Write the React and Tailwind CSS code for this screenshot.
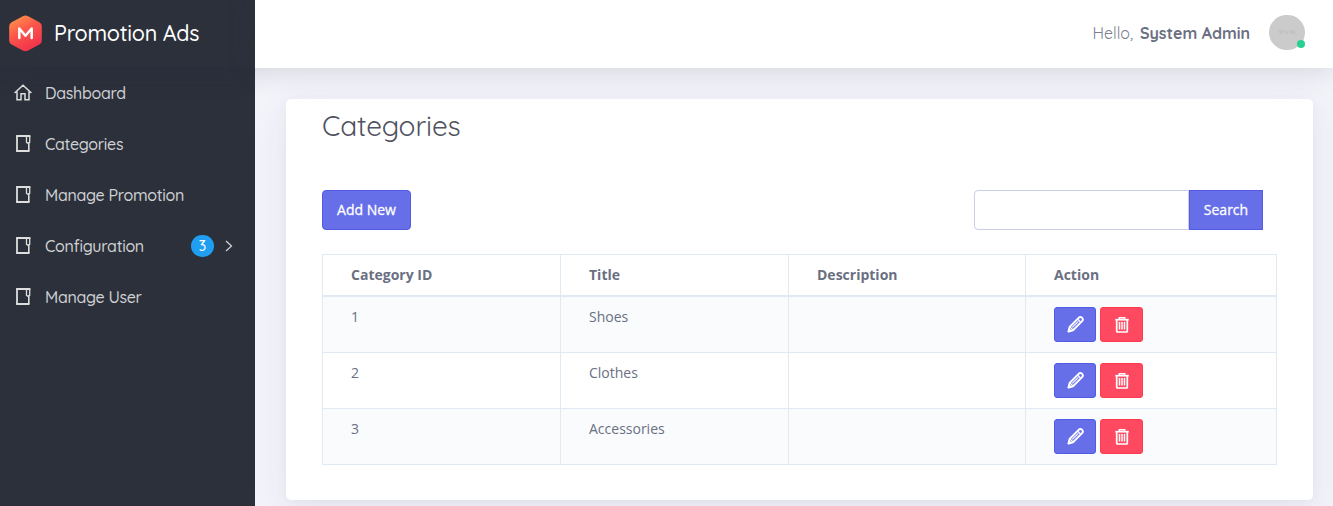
const heading = "font-[Quicksand,Lato,sans-serif]";

function HomeIcon() {
  return (
    <svg width="18" height="17" viewBox="0 0 18 17" fill="none" stroke="#dedede" strokeWidth="1.5">
      <path d="M.6 9 9 1.200 17.400 9M3 7.500v8.300h4V9.800h4v6h4V7.500" />
    </svg>
  );
}

function BookIcon() {
  return (
    <svg width="17" height="18" viewBox="0 0 17 18" fill="none" stroke="#dedede">
      <path d="M3 1v15" strokeWidth="1.800" />
      <path d="M2.100 1h14.300M2.100 16h13.400" strokeWidth="2" />
      <path d="M14.800 8v8" strokeWidth="1.600" />
      <path d="M12.500 1v6.300l1.400.9 1.800-.9V1" strokeWidth="1.300" />
    </svg>
  );
}

function PencilIcon() {
  return (
    <svg width="18" height="17" viewBox="0 0 18 17" fill="none" stroke="white" strokeWidth="1.900" strokeLinejoin="round">
      <path d="M1.700 15.200 2.600 11 11.400 2.100c1.200-1.200 2.600-1.300 3.700-.3 1.100 1.100.9 2.500-.2 3.600L6 14.200l-4.300 1Z" />
      <path d="m10.600 3 3.500 3.500M3 10.900l3 3M5.300 11.400l6-6" strokeWidth="1.200" />
      <path d="m1.500 15.500.6-2.200 1.600 1.600-2.200.6Z" fill="white" />
    </svg>
  );
}

function TrashIcon() {
  return (
    <svg width="14" height="16" viewBox="0 0 14 16" fill="none" stroke="white">
      <path d="M.3 2.700h13.400" strokeWidth="1.700" />
      <path d="M4.300 2.500V.8h5.400v1.700" strokeWidth="1.500" />
      <path d="M1.700 3v11.200c0 .5.300.8.8.8h9c.5 0 .8-.3.800-.8V3" strokeWidth="1.700" />
      <path d="M4.500 5v7.500M7 5v7.500M9.500 5v7.500" strokeWidth="1.500" />
    </svg>
  );
}

function NavItem({ icon, label, children }) {
  return (
    <a className="flex h-[51px] items-center pl-[14px] pr-[22px]">
      <span className="flex w-[31px] shrink-0">{icon}</span>
      <span className={`whitespace-nowrap pt-px text-[16px] font-medium tracking-[-0.3px] text-[#cfd0d4] ${heading}`}>{label}</span>
      {children}
    </a>
  );
}

function Sidebar() {
  return (
    <aside className="flex w-[255px] shrink-0 flex-col bg-[#2c303b]">
      <div className="flex h-[67px] items-center pl-[9px] shadow-[0_0_30px_rgba(40,30,60,0.25)]">
        <svg width="33" height="37" viewBox="0 0 33 37">
          <defs>
            <linearGradient id="brand" x1="0.1" y1="0" x2="0.65" y2="1">
              <stop offset="0" stopColor="#ff9a49" />
              <stop offset="0.48" stopColor="#fb554b" />
              <stop offset="1" stopColor="#f0314c" />
            </linearGradient>
          </defs>
          <path d="M13.800 1.200q2.700-1.400 5.400 0l11.200 6q2.400 1.300 2.400 4v14.200q0 2.700-2.400 4l-11.200 6.200q-2.700 1.400-5.400 0L2.600 29.400Q.2 28.100.2 25.400V11.200q0-2.700 2.400-4Z" fill="url(#brand)" />
          <path d="M10.300 23V13.500l6.200 7.300 6.200-7.300V23" fill="none" stroke="white" strokeWidth="2.500" strokeLinecap="round" strokeLinejoin="round" />
        </svg>
        <span className={`ml-[12px] whitespace-nowrap text-[21.500px] font-medium tracking-[-0.25px] text-white ${heading}`}>Promotion Ads</span>
      </div>
      <nav className="flex flex-col">
        <NavItem icon={<HomeIcon />} label="Dashboard" />
        <NavItem icon={<BookIcon />} label="Categories" />
        <NavItem icon={<BookIcon />} label="Manage Promotion" />
        <NavItem icon={<BookIcon />} label="Configuration">
          <span className={`ml-auto flex h-[22px] w-[23px] items-center justify-center rounded-full bg-[#209ff2] pt-[2px] text-[14px] font-medium text-white ${heading}`}>3</span>
          <svg className="ml-[11px] mt-px" width="8" height="12" viewBox="0 0 8 12" fill="none" stroke="#d5d5d8" strokeWidth="1.200">
            <path d="m1 1 5.500 5L1 11" />
          </svg>
        </NavItem>
        <NavItem icon={<BookIcon />} label="Manage User" />
      </nav>
    </aside>
  );
}

function TopBar() {
  return (
    <header className="flex h-[68px] shrink-0 items-center justify-end bg-white pr-[28px] text-[#6b6f82] shadow-[0_0_30px_rgba(60,60,70,0.2)]">
      <span className={`mb-[2px] whitespace-nowrap text-[16px] font-normal text-[#7b7f90] ${heading}`}>Hello,</span>
      <span className={`mb-[2px] ml-[7px] whitespace-nowrap text-[16px] font-bold ${heading}`}>System Admin</span>
      <span className="relative ml-[19px] mt-[-3px] flex h-[35px] w-[36px] items-center justify-center rounded-full bg-[#cbcbcb]">
        <span className="font-['Liberation_Sans',sans-serif] text-[5px] text-[#b9b9b9]">97 x 90</span>
        <i className="absolute -bottom-px right-0 mb-[3px] h-2 w-2 rounded-full bg-[#28d094]" />
      </span>
    </header>
  );
}

const rows = [
  { id: "1", title: "Shoes", bg: "bg-[#f9fbfd]" },
  { id: "2", title: "Clothes", bg: "bg-white" },
  { id: "3", title: "Accessories", bg: "bg-[#f9fbfd]" },
];

const columns = "grid grid-cols-[238px_228px_237px_251px]";
const cell = "border-r border-[#e1eaf2] pl-[28px]";
const action = "border border-[#535be2] bg-[#666ee8] pb-[2px] text-[14px] font-medium text-white [-webkit-text-stroke:0.3px_white]";

function CategoryTable() {
  return (
    <div className="mt-[24px] w-[955px] border-l border-t border-[#e1eaf2] text-[14px]">
      <div className={`${columns} h-[42px] border-b-2 border-[#e1eaf2] font-bold leading-[40px]`}>
        <div className={cell}>Category ID</div>
        <div className={cell}>Title</div>
        <div className={cell}>Description</div>
        <div className={cell}>Action</div>
      </div>
      {rows.map((row) => (
        <div key={row.id} className={`${columns} h-[56px] border-b border-[#e1eaf2] leading-[40px] ${row.bg}`}>
          <div className={cell}>{row.id}</div>
          <div className={cell}>{row.title}</div>
          <div className={cell} />
          <div className={`${cell} flex gap-1 pt-[10px]`}>
            <button className="flex h-[35px] w-[42px] items-center justify-center rounded-[3px] border border-[#535be2] bg-[#666ee8] pl-px">
              <PencilIcon />
            </button>
            <button className="flex h-[35px] w-[43px] items-center justify-center rounded-[3px] border border-[#ff394f] bg-[#ff4961]">
              <TrashIcon />
            </button>
          </div>
        </div>
      ))}
    </div>
  );
}

export default function App() {
  return (
    <div className="flex h-[506px] w-[1333px] overflow-hidden bg-[#f3f4fa] font-['Open_Sans',sans-serif] text-[#6b6f82]">
      <Sidebar />
      <div className="flex min-w-0 flex-1 flex-col">
        <TopBar />
        <main className="pl-[31px] pt-[31px]">
          <section className="h-[401px] w-[1027px] rounded-[5px] bg-white pl-[36px] shadow-[0_10px_40px_rgba(62,57,107,0.07),0_3px_12px_rgba(62,57,107,0.05)]">
            <h1 className={`h-[91px] whitespace-nowrap pt-[7px] text-[28px] font-normal leading-[40px] tracking-[-0.12px] text-[#505260] ${heading}`}>Categories</h1>
            <div className="flex h-10 items-stretch pr-[50px]">
              <button className={`w-[89px] rounded-[4px] ${action}`}>Add New</button>
              <input className="ml-auto w-[215px] rounded-l-[4px] border border-[#cacfe7] bg-white px-3 text-[14px] outline-none" />
              <button className={`w-[74px] ${action}`}>Search</button>
            </div>
            <CategoryTable />
          </section>
        </main>
      </div>
    </div>
  );
}
